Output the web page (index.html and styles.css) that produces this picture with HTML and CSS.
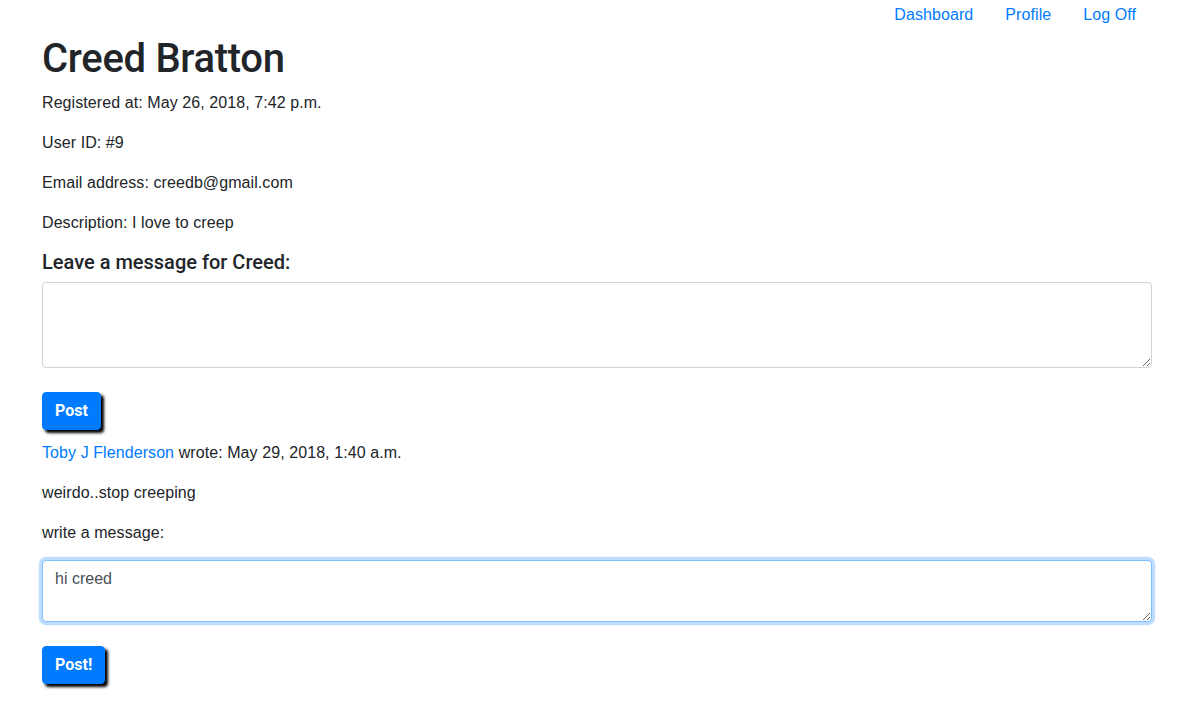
FILE: index.html
```html
<!DOCTYPE html>
<html lang="en">
<head>
<meta charset="utf-8">
<title>Creed Bratton</title>
<link rel="stylesheet" href="styles.css">
</head>
<body>
<div class="container">
  <nav class="nav">
    <a class="nav-link" href="#">Dashboard</a>
    <a class="nav-link" href="#">Profile</a>
    <a class="nav-link" href="#">Log Off</a>
  </nav>
  <h1 class="title">Creed Bratton</h1>
  <p>Registered at: May 26, 2018, 7:42 p.m.</p>
  <p>User ID: #9</p>
  <p>Email address: creedb@gmail.com</p>
  <p>Description: I love to creep</p>
  <h5 class="subtitle">Leave a message for Creed:</h5>
  <form class="form">
    <textarea class="form-control" rows="3"></textarea>
    <button type="button" class="btn">Post</button>
  </form>
  <div class="message">
    <p class="meta"><a href="#">Toby J Flenderson</a> wrote: May 29, 2018, 1:40 a.m.</p>
    <p>weirdo..stop creeping</p>
    <p>write a message:</p>
    <form class="form">
      <textarea class="form-control focused" rows="2">hi creed</textarea>
      <button type="button" class="btn">Post!</button>
    </form>
  </div>
</div>
</body>
</html>
```
FILE: styles.css
```css
* { box-sizing: border-box; }
html, body { margin: 0; padding: 0; }
body {
  font-family: "Liberation Sans", Arial, sans-serif;
  font-size: 16px;
  line-height: 24px;
  color: #212529;
  background: #fff;
  letter-spacing: 0.08px;
}
.container {
  width: 1110px;
  margin-left: 42px;
}
a { color: #007bff; text-decoration: none; }
.nav {
  display: flex;
  justify-content: flex-end;
  height: 34px;
}
.nav-link {
  display: block;
  padding: 3px 16px 7px;
}
.title {
  margin: 0 0 8px;
  padding-top: 1px;
  height: 48px;
  font-family: Roboto, "Liberation Sans", sans-serif;
  font-size: 40px;
  line-height: 47px;
  font-weight: 500;
  letter-spacing: -0.3px;
}
p {
  margin: 0 0 15px;
  padding-top: 1px;
}
.subtitle {
  margin: 0 0 8px;
  font-family: Roboto, "Liberation Sans", sans-serif;
  font-size: 20px;
  line-height: 24px;
  font-weight: 500;
  letter-spacing: 0;
}
.form { margin: 0; }
.form-control {
  display: block;
  width: 100%;
  padding: 6px 12px;
  font-family: inherit;
  font-size: 16px;
  line-height: 24px;
  color: #495057;
  background: #fff;
  border: 1px solid #ced4da;
  border-radius: 4px;
  margin: 0 0 24px;
  resize: vertical;
}
.form-control.focused {
  border-color: #80bdff;
  box-shadow: 0 0 0 3.2px rgba(0, 123, 255, 0.25);
  outline: none;
}
.btn {
  display: block;
  padding: 6px 12px;
  font-family: Roboto, "Liberation Sans", sans-serif;
  font-size: 16px;
  line-height: 24px;
  font-weight: 700;
  color: #fff;
  background: #007bff;
  border: 1px solid #007bff;
  border-radius: 4px;
  box-shadow: 3px 3px 3px #000;
  margin: 0 0 10px;
}
```
